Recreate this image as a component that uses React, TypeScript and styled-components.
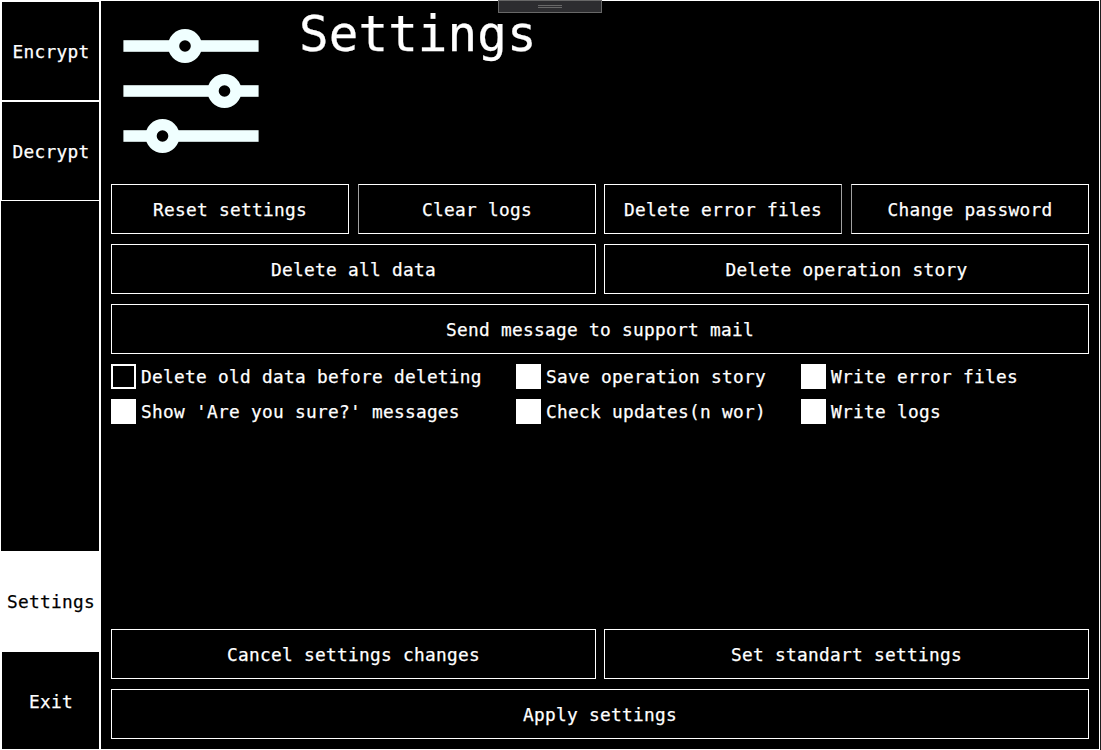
import React, { useState } from "react";
import styled, { createGlobalStyle } from "styled-components";

const GlobalStyle = createGlobalStyle`
  * { box-sizing: border-box; }
  body { margin: 0; background: #1e1e1e; overflow: hidden; }
`;

const Window = styled.div`
  display: flex;
  position: relative;
  width: 1100px;
  height: 750px;
  border: 1px solid #fff;
  background: #000;
  color: #fff;
  font-family: "DejaVu Sans Mono", "Liberation Mono", monospace;
  font-size: 17.8px;
  letter-spacing: 0.29px;
  -webkit-text-stroke: 0.25px currentColor;
`;

const Sidebar = styled.nav`
  display: flex;
  flex-direction: column;
  flex: 0 0 100px;
  border-right: 2px solid #fff;
`;

const NavButton = styled.button<{ $active?: boolean }>`
  flex: 0 0 100px;
  padding: 0 0 0 1px;
  border: 1px solid #fff;
  border-right: 0;
  background: ${(p) => (p.$active ? "#fff" : "#000")};
  color: ${(p) => (p.$active ? "#000" : "#fff")};
  font: inherit;
  letter-spacing: inherit;
  white-space: nowrap;
`;

const ExitButton = styled(NavButton)`
  flex-basis: 98px;
  padding-top: 2px;
  border-bottom: 0;
`;

const Spacer = styled.div`
  flex: 1;
`;

const Main = styled.main`
  display: flex;
  flex-direction: column;
  flex: 1;
  padding: 0 10px 10px;
`;

const Header = styled.header`
  display: flex;
  flex: 0 0 183px;
  padding-left: 12px;
`;

const SliderIcon = styled.svg`
  flex: none;
  width: 136px;
  height: 128px;
  margin-top: 25px;
`;

const Title = styled.h1`
  margin: 0 0 0 40px;
  font-size: 49.2px;
  font-weight: 400;
  line-height: 66px;
  letter-spacing: 0.1px;
`;

const ButtonRow = styled.div`
  display: flex;
  gap: 8px;
  height: 50px;
  margin-bottom: 10px;

  &:last-child {
    margin-bottom: 0;
  }
`;

const ButtonPair = styled.div`
  display: flex;
  flex: 1;
  gap: 9px;
`;

const ActionButton = styled.button<{ $dimLeft?: boolean; $dimRight?: boolean }>`
  flex: 1;
  min-width: 0;
  padding: 0;
  border: 1px solid #fff;
  border-left-color: ${(p) => (p.$dimLeft ? "#a0a0a0" : "#fff")};
  border-right-color: ${(p) => (p.$dimRight ? "#a0a0a0" : "#fff")};
  background: #000;
  color: #fff;
  font: inherit;
  letter-spacing: inherit;
  white-space: nowrap;
`;

const Options = styled.div`
  display: grid;
  grid-template-columns: 405px 285px 1fr;
  grid-auto-rows: 25px;
  row-gap: 10px;
`;

const Option = styled.label`
  display: flex;
  align-items: center;
  gap: 5px;
  line-height: 25px;
  white-space: nowrap;
`;

const CheckBox = styled.input`
  appearance: none;
  width: 25px;
  height: 25px;
  margin: 0;
  border: 2px solid #fff;
  background: #000;

  &:checked {
    background: #fff;
  }
`;

const DockHandle = styled.div`
  position: absolute;
  top: -1px;
  left: 497px;
  display: flex;
  align-items: center;
  justify-content: center;
  width: 104px;
  height: 13px;
  border: 1px solid #686868;
  background: #2d2d30;
`;

const Grip = styled.span`
  width: 24px;
  height: 3px;
  border: solid #686868;
  border-width: 1px 0;
`;

const sliders = [
  { y: 20, knob: 62 },
  { y: 65, knob: 101.5 },
  { y: 110, knob: 39.5 },
];

const options = [
  { label: "Delete old data before deleting", on: false },
  { label: "Save operation story", on: true },
  { label: "Write error files", on: true },
  { label: "Show 'Are you sure?' messages", on: true },
  { label: "Check updates(n wor)", on: true },
  { label: "Write logs", on: true },
];

export default function App() {
  const [checked, setChecked] = useState(options.map((o) => o.on));
  const toggle = (index: number) =>
    setChecked((values) => values.map((v, i) => (i === index ? !v : v)));

  return (
    <>
      <GlobalStyle />
      <Window>
        <Sidebar>
          <NavButton>Encrypt</NavButton>
          <NavButton>Decrypt</NavButton>
          <Spacer />
          <NavButton $active>Settings</NavButton>
          <ExitButton>Exit</ExitButton>
        </Sidebar>
        <Main>
          <Header>
            <SliderIcon viewBox="0 0 136 128">
              {sliders.map(({ y, knob }) => (
                <g key={y}>
                  <rect x="0.4" y={y - 5.8} width="135.2" height="11.6" fill="#f0ffff" />
                  <circle cx={knob} cy={y} r="17" fill="#f0ffff" />
                  <circle cx={knob} cy={y} r="5.8" fill="#000" />
                </g>
              ))}
            </SliderIcon>
            <Title>Settings</Title>
          </Header>
          <ButtonRow>
            <ButtonPair>
              <ActionButton>Reset settings</ActionButton>
              <ActionButton $dimLeft>Clear logs</ActionButton>
            </ButtonPair>
            <ButtonPair>
              <ActionButton $dimRight>Delete error files</ActionButton>
              <ActionButton $dimLeft>Change password</ActionButton>
            </ButtonPair>
          </ButtonRow>
          <ButtonRow>
            <ActionButton>Delete all data</ActionButton>
            <ActionButton>Delete operation story</ActionButton>
          </ButtonRow>
          <ButtonRow>
            <ActionButton>Send message to support mail</ActionButton>
          </ButtonRow>
          <Options>
            {options.map(({ label }, i) => (
              <Option key={label}>
                <CheckBox type="checkbox" checked={checked[i]} onChange={() => toggle(i)} />
                {label}
              </Option>
            ))}
          </Options>
          <Spacer />
          <ButtonRow>
            <ActionButton>Cancel settings changes</ActionButton>
            <ActionButton>Set standart settings</ActionButton>
          </ButtonRow>
          <ButtonRow>
            <ActionButton>Apply settings</ActionButton>
          </ButtonRow>
        </Main>
        <DockHandle>
          <Grip />
        </DockHandle>
      </Window>
    </>
  );
}
